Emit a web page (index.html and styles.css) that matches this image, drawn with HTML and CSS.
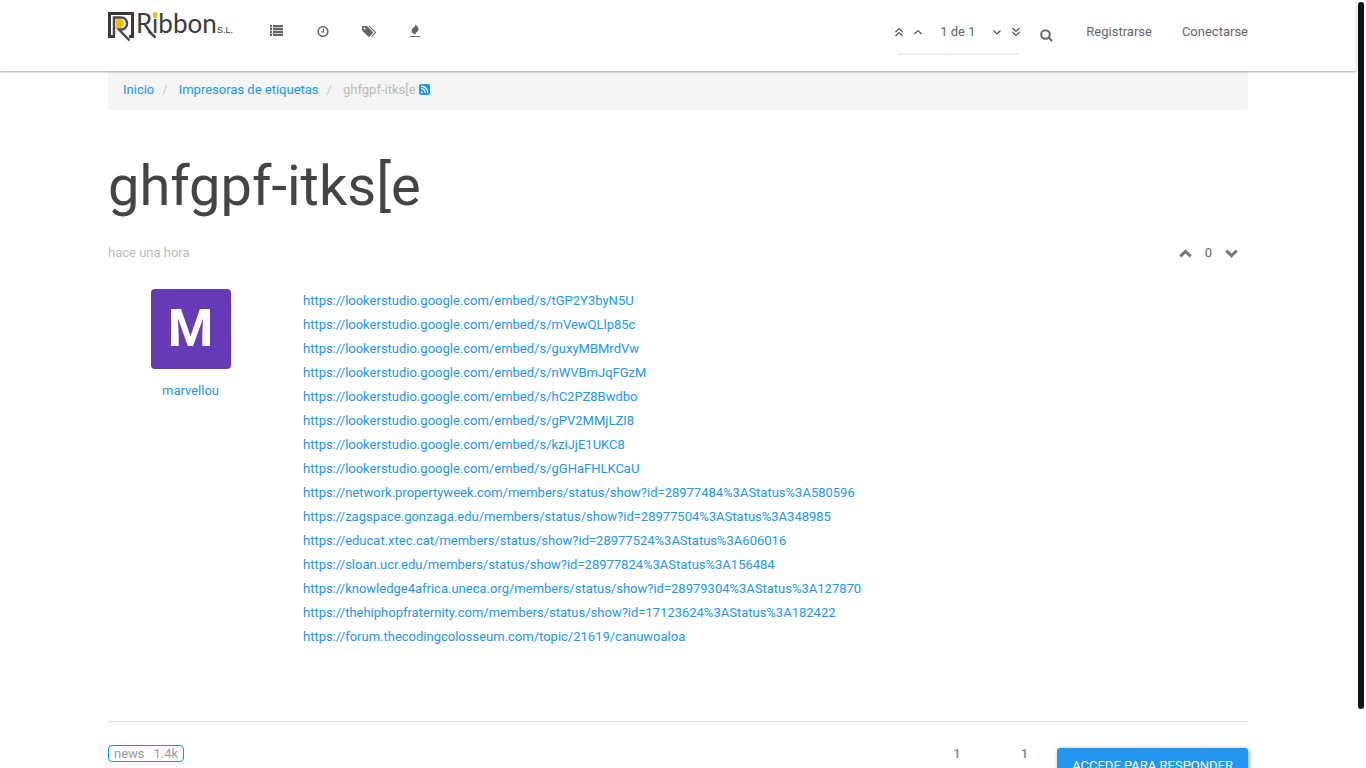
FILE: index.html
```html
<!DOCTYPE html>
<html lang="es">
<head>
<meta charset="utf-8">
<meta name="viewport" content="width=device-width, initial-scale=1">
<title>ghfgpf-itks[e | Ribbon S.L.</title>
<link rel="stylesheet" href="styles.css">
</head>
<body>
<header class="navbar">
  <div class="container navbar-inner">
    <a class="brand" href="#" aria-label="Ribbon S.L.">
      <svg class="logo" width="126" height="32" viewBox="0 0 126 32">
        <path d="M7 25.500H1.500V2.500H24.500V25.500H21" fill="none" stroke="#3b3b3d" stroke-width="3"/>
        <path d="M8 8h5a5 5 0 0 1 0 9H8z" fill="#fdb813"/>
        <path d="M6 24V6.500H13C21 6.500 21 18.500 13 18.500H11L21.500 29.500" fill="none" stroke="#4a4a4c" stroke-width="2.500"/>
        <path d="M40.500 20L47.500 26.500" stroke="#4a4a4c" stroke-width="2.500"/>
        <text class="logo-name" x="28" y="22">Ribbon</text>
        <ellipse cx="47" cy="4" rx="2.200" ry="3.200" fill="#fdb813"/>
        <text class="logo-suffix" x="109" y="22">S.L.</text>
      </svg>
    </a>
    <nav class="main-nav">
      <a href="#" aria-label="Categorías"><svg width="14" height="14" viewBox="0 0 14 14" fill="currentColor"><path d="M0 1h2v2H0zM3 1h10v2H3zM0 4h2v2H0zM3 4h10v2H3zM0 7h2v2H0zM3 7h10v2H3zM0 10h2v2H0zM3 10h10v2H3z"/><path d="M0 3h13v1H0zM0 6h13v1H0zM0 9h13v1H0z" opacity=".35"/></svg></a>
      <a href="#" aria-label="Recientes"><svg width="12" height="14" viewBox="0 0 12 14" fill="none" stroke="currentColor"><circle cx="6" cy="7.500" r="4.800" stroke-width="1.600"/><path d="M6.500 4.500V8H4" stroke-width="1.100"/></svg></a>
      <a href="#" aria-label="Etiquetas"><svg width="15" height="14" viewBox="0 0 15 14" fill="currentColor"><path fill-rule="evenodd" d="M0 2.500Q0 2 .600 2H5L11 8Q11.500 8.500 11 9L7.500 12.700Q7 13 6.500 12.700L.500 7Q0 6.500 0 6zM2.500 3.300a1.100 1.100 0 1 0 .1 0z"/><path d="M6.500 2h1.400l6 6q.500.500 0 1l-3.600 3.700q-.600.500-1.200 0L12.500 9q.4-.5 0-1z"/></svg></a>
      <a href="#" aria-label="Popular"><svg width="10" height="14" viewBox="0 0 10 14" fill="currentColor"><path d="M5.500 0C6 2 8.800 2.500 8.500 5.500C8.300 8 5.500 8 5.500 10.500C3 9.800 1.200 8.500 1.700 6C2.200 3.500 6 3 5.500 0zM0 12h10v1H0z"/></svg></a>
    </nav>
    <div class="pager">
      <div class="pager-row">
        <a href="#" aria-label="Primer mensaje"><svg width="8" height="10" viewBox="0 0 8 10"><path d="M.500 5L4 1.500L7.500 5M.500 9L4 5.500L7.500 9"/></svg></a>
        <a href="#" aria-label="Anterior"><svg width="8" height="10" viewBox="0 0 8 10"><path d="M.500 7L4 3.500L7.500 7"/></svg></a>
        <span class="pager-text">1 de 1</span>
        <a href="#" aria-label="Siguiente"><svg width="8" height="10" viewBox="0 0 8 10"><path d="M.500 3.500L4 7L7.500 3.500"/></svg></a>
        <a href="#" aria-label="Último mensaje"><svg width="8" height="10" viewBox="0 0 8 10"><path d="M.500 1L4 4.500L7.500 1M.500 5L4 8.500L7.500 5"/></svg></a>
      </div>
      <div class="progress"></div>
    </div>
    <button class="search" type="button" aria-label="Buscar"><svg width="13" height="13" viewBox="0 0 13 13" fill="none" stroke="currentColor" stroke-width="2"><circle cx="5.500" cy="5.500" r="4.300"/><path d="M8.700 8.700L12 12"/></svg></button>
    <nav class="account">
      <a href="#">Registrarse</a>
      <a href="#">Conectarse</a>
    </nav>
  </div>
</header>

<main class="container">
  <ol class="breadcrumb">
    <li><a href="#">Inicio</a></li>
    <li><a href="#">Impresoras de etiquetas</a></li>
    <li class="current">ghfgpf-itks[e <a href="#" aria-label="RSS"><svg width="11" height="11" viewBox="0 0 11 11"><rect width="11" height="11" rx="2" fill="currentColor"/><circle cx="2.800" cy="8.200" r="1" fill="#fff"/><path d="M2 4.700A4.300 4.300 0 0 1 6.300 9M2 2.200A6.800 6.800 0 0 1 8.800 9" fill="none" stroke="#fff" stroke-width="1.200"/></svg></a></li>
  </ol>

  <h1 class="title">ghfgpf-itks[e</h1>

  <div class="post-meta">
    <span class="time">hace una hora</span>
    <div class="votes">
      <button type="button" aria-label="Votar a favor"><svg width="13" height="9" viewBox="0 0 13 9"><path d="M1.300 7.300L6.500 2.300L11.700 7.300"/></svg></button>
      <span>0</span>
      <button type="button" aria-label="Votar en contra"><svg width="13" height="9" viewBox="0 0 13 9"><path d="M1.300 1.700L6.500 6.700L11.700 1.700"/></svg></button>
    </div>
  </div>

  <article class="post">
    <div class="author">
      <div class="avatar">M</div>
      <a href="#">marvellou</a>
    </div>
    <div class="links">
      <a href="#">https://lookerstudio.google.com/embed/s/tGP2Y3byN5U</a>
      <a href="#">https://lookerstudio.google.com/embed/s/mVewQLlp85c</a>
      <a href="#">https://lookerstudio.google.com/embed/s/guxyMBMrdVw</a>
      <a href="#">https://lookerstudio.google.com/embed/s/nWVBmJqFGzM</a>
      <a href="#">https://lookerstudio.google.com/embed/s/hC2PZ8Bwdbo</a>
      <a href="#">https://lookerstudio.google.com/embed/s/gPV2MMjLZI8</a>
      <a href="#">https://lookerstudio.google.com/embed/s/kziJjE1UKC8</a>
      <a href="#">https://lookerstudio.google.com/embed/s/gGHaFHLKCaU</a>
      <a href="#">https://network.propertyweek.com/members/status/show?id=28977484%3AStatus%3A580596</a>
      <a href="#">https://zagspace.gonzaga.edu/members/status/show?id=28977504%3AStatus%3A348985</a>
      <a href="#">https://educat.xtec.cat/members/status/show?id=28977524%3AStatus%3A606016</a>
      <a href="#">https://sloan.ucr.edu/members/status/show?id=28977824%3AStatus%3A156484</a>
      <a href="#">https://knowledge4africa.uneca.org/members/status/show?id=28979304%3AStatus%3A127870</a>
      <a href="#">https://thehiphopfraternity.com/members/status/show?id=17123624%3AStatus%3A182422</a>
      <a href="#">https://forum.thecodingcolosseum.com/topic/21619/canuwoaloa</a>
    </div>
  </article>

  <div class="topic-bar">
    <a class="tag" href="#"><span>news</span><span>1.4k</span></a>
    <div class="stats"><span>1</span><span>1</span></div>
    <button class="reply" type="button">ACCEDE PARA RESPONDER</button>
  </div>
</main>
<div class="scroll-thumb"></div>
</body>
</html>
```
FILE: styles.css
```css
* {
  box-sizing: border-box;
}

html {
  height: 100%;
  overflow: hidden;
}

body {
  height: 100%;
  margin: 0;
  padding-right: 10px;
  overflow: hidden;
  background: #fff;
  color: #666;
  font: 13px/24px Roboto, "Liberation Sans", sans-serif;
}

a {
  color: #2196f3;
  text-decoration: none;
}

button {
  padding: 0;
  border: 0;
  background: none;
  color: inherit;
  font: inherit;
  cursor: pointer;
}

svg {
  display: block;
}

.container {
  width: 100%;
  max-width: 1140px;
  margin: 0 auto;
}

/* Navigation */
.navbar {
  position: relative;
  height: 71px;
  background: #fff;
  box-shadow: 0 1px 2px rgba(0, 0, 0, 0.35);
}

.navbar-inner {
  display: flex;
  align-items: flex-start;
}

.navbar a {
  color: #666;
}

.brand {
  padding-top: 11px;
}

.logo {
  overflow: visible;
}

.logo-name {
  fill: #3b3b3d;
  font: 26px Lato, sans-serif;
}

.logo-suffix {
  fill: #3b3b3d;
  font: 9px "Liberation Sans", sans-serif;
}

.main-nav {
  display: flex;
  gap: 33px;
  padding: 24px 0 0 36px;
}

.pager {
  width: 125px;
  margin-left: auto;
  padding-top: 20px;
}

.pager-row {
  display: flex;
  align-items: center;
  justify-content: space-between;
}

.pager svg {
  fill: none;
  stroke: #555;
  stroke-width: 1.2;
}

.pager-text {
  padding: 0 7px;
}

.progress {
  height: 2px;
  margin: 9px 1px 0 3px;
  background: #eee;
}

.search {
  margin: 29px 33px 0 20px;
}

.account {
  display: flex;
  gap: 30px;
  padding-top: 20px;
}

/* Topic */
.breadcrumb {
  display: flex;
  margin: 0;
  padding: 7px 15px 8px;
  border-radius: 0 0 3px 3px;
  background: #f5f5f5;
  list-style: none;
}

.breadcrumb li + li::before {
  content: "/";
  padding: 0 11px 0 8px;
  color: #ccc;
}

.breadcrumb .current {
  color: #bbb;
}

.breadcrumb svg {
  display: inline-block;
  vertical-align: -1px;
}

.title {
  margin: 45px 0 24px;
  color: #444;
  font-size: 56px;
  font-weight: 400;
  line-height: 62px;
}

.post-meta {
  display: flex;
  justify-content: space-between;
}

.time {
  color: #bbb;
}

.votes {
  display: flex;
  align-items: center;
  gap: 13px;
  padding-right: 10px;
}

.votes svg {
  fill: none;
  stroke: #777;
  stroke-width: 3;
}

.post {
  display: flex;
  gap: 30px;
  padding: 24px 0 72px;
}

.author {
  display: flex;
  flex: none;
  flex-direction: column;
  align-items: center;
  gap: 10px;
  width: 165px;
}

.avatar {
  width: 80px;
  height: 80px;
  border-radius: 4px;
  background: #673ab7;
  color: #fff;
  font-size: 52px;
  font-weight: 700;
  line-height: 80px;
  text-align: center;
}

.links {
  display: flex;
  flex: 1;
  flex-direction: column;
  align-items: flex-start;
}

.topic-bar {
  display: flex;
  align-items: flex-start;
  padding-top: 23px;
  border-top: 1px solid #ddd;
}

.tag {
  display: flex;
  gap: 9px;
  padding: 0 5px;
  border: 1px solid #039be5;
  border-radius: 4px;
  color: #999;
  line-height: 15px;
}

.stats {
  display: flex;
  gap: 60px;
  margin: -3px 29px 0 auto;
  color: #888;
  font-weight: 500;
}

.reply {
  margin-top: 3px;
  padding: 6px 15px;
  border-radius: 3px;
  background: #2196f3;
  box-shadow: 1px 1px 4px rgba(0, 0, 0, 0.4);
  color: #fff;
}

/* Page scroll indicator, laid over the right edge */
.scroll-thumb {
  position: fixed;
  top: 2px;
  right: 2px;
  bottom: 59px;
  width: 6px;
  border-radius: 3px;
  background: #111;
}
```
